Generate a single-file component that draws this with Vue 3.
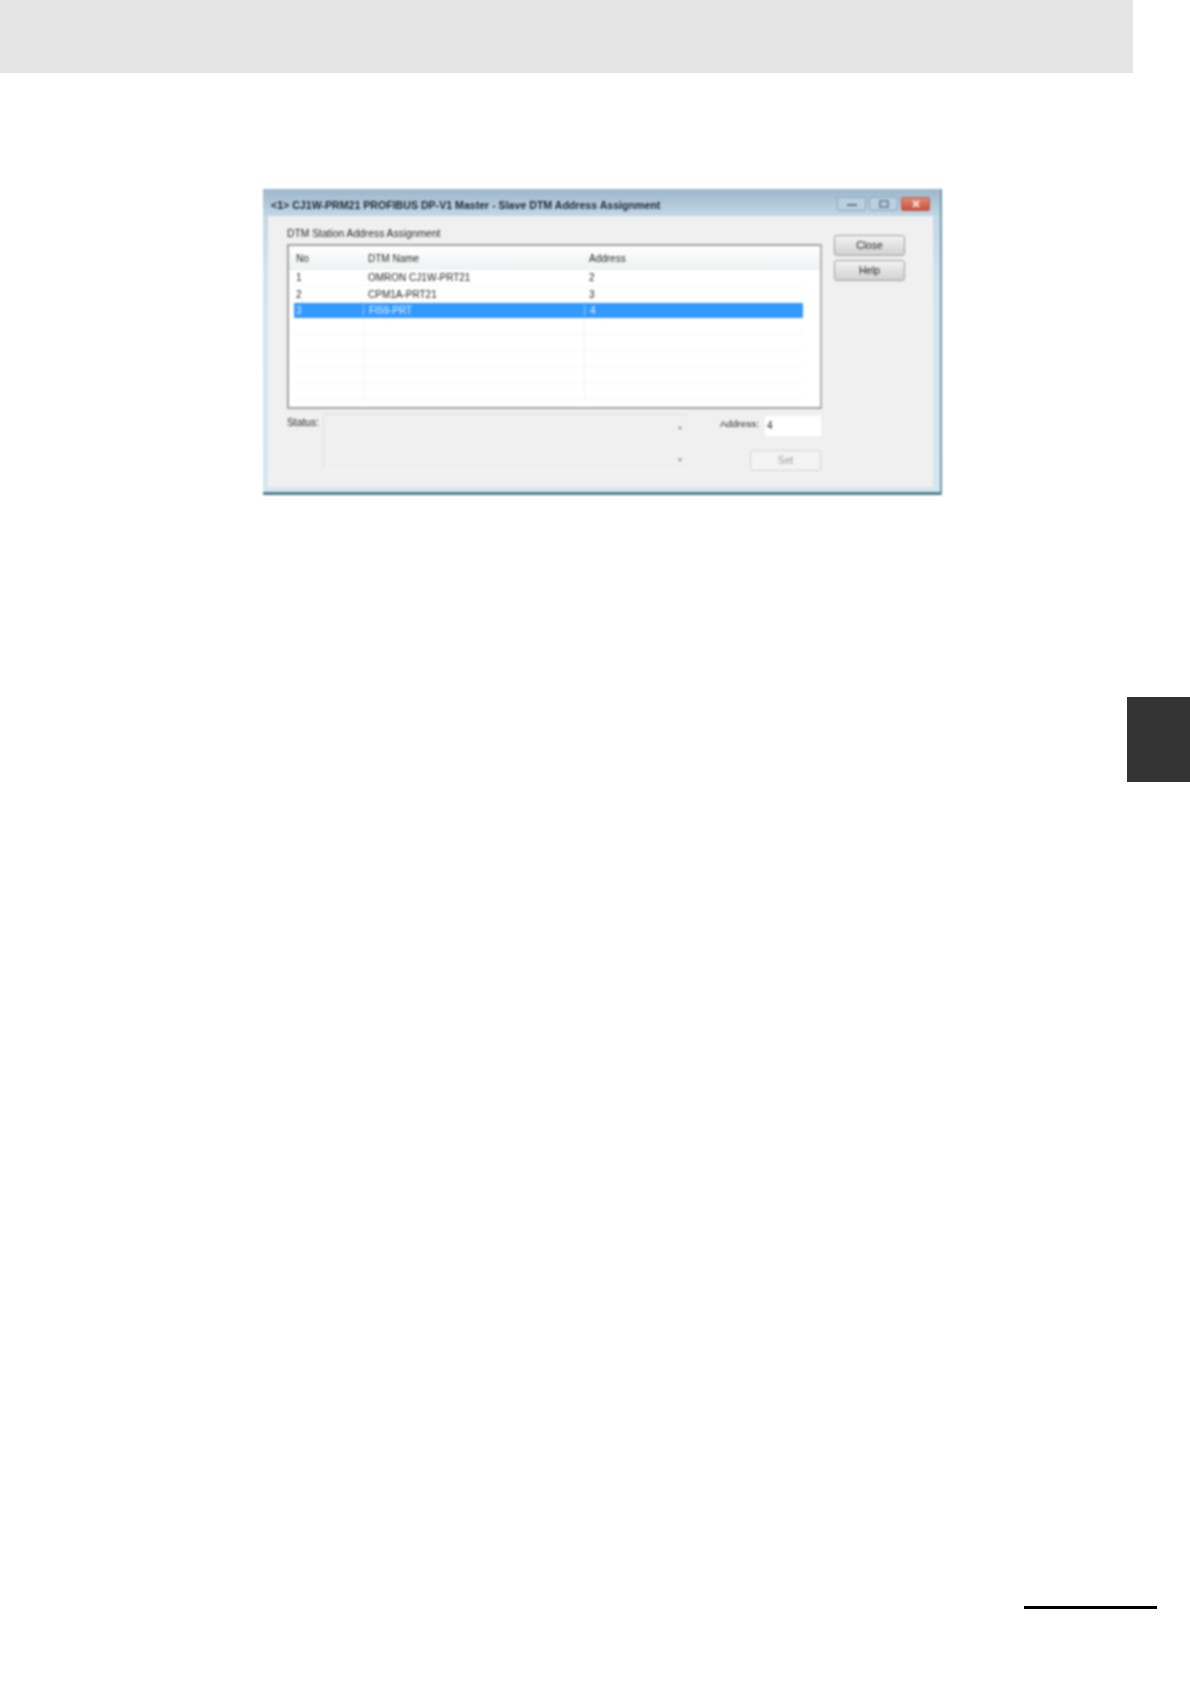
<template>
  <div class="page">
    <div class="top-band"></div>

    <div class="window">
      <div class="title-bar">
        <span class="title">&lt;1&gt; CJ1W-PRM21 PROFIBUS DP-V1 Master - Slave DTM Address Assignment</span>
        <div class="win-buttons">
          <div class="win-btn">
            <svg width="12" height="6" viewBox="0 0 12 6"><path d="M1 4h10" stroke="#5f7890" stroke-width="2" /></svg>
          </div>
          <div class="win-btn">
            <svg width="12" height="8" viewBox="0 0 12 8"><rect x="2" y="1" width="8" height="6" fill="none" stroke="#5f7890" stroke-width="1.5" /></svg>
          </div>
          <div class="win-btn close-x">
            <svg width="12" height="8" viewBox="0 0 12 8"><path d="M3 1l6 6M9 1L3 7" stroke="#f4e6e2" stroke-width="2" /></svg>
          </div>
        </div>
      </div>

      <div class="client">
        <div class="main-col">
          <div class="group-label">DTM Station Address Assignment</div>
          <div class="list">
            <div class="list-head">
              <span class="c-no">No</span>
              <span class="c-name">DTM Name</span>
              <span class="c-addr">Address</span>
            </div>
            <div
              v-for="row in rows"
              :key="row.no"
              class="list-row"
              :class="{ selected: row.selected }"
            >
              <span class="c-no">{{ row.no }}</span>
              <span class="c-name">{{ row.name }}</span>
              <span class="c-addr">{{ row.address }}</span>
            </div>
            <div v-for="n in 5" :key="n" class="list-row empty">
              <span class="c-no"></span>
              <span class="c-name"></span>
              <span class="c-addr"></span>
            </div>
          </div>

          <div class="lower">
            <span class="status-label">Status:</span>
            <div class="status-box">
              <span class="arrow">&#9650;</span>
              <span class="arrow">&#9660;</span>
            </div>
            <div class="address-side">
              <div class="address-line">
                <span class="address-label">Address:</span>
                <div class="address-input">4</div>
              </div>
              <button class="btn set" type="button" disabled>Set</button>
            </div>
          </div>
        </div>

        <div class="side-col">
          <button class="btn" type="button">Close</button>
          <button class="btn" type="button">Help</button>
        </div>
      </div>
    </div>

    <div class="side-tab"></div>
    <div class="foot-line"></div>
  </div>
</template>

<script setup>
const rows = [
  { no: 1, name: 'OMRON CJ1W-PRT21', address: 2 },
  { no: 2, name: 'CPM1A-PRT21', address: 3 },
  { no: 3, name: 'FI59-PRT', address: 4, selected: true }
]
</script>

<style>
body {
  background: #fff;
}
</style>

<style scoped>
.page {
  width: 1190px;
  height: 1684px;
  display: flex;
  flex-direction: column;
  font-family: "Liberation Sans", Arial, sans-serif;
  color: #262626;
  overflow: hidden;
}

.top-band {
  width: 1133px;
  height: 73px;
  background: #e5e5e5;
}

.window {
  width: 679px;
  height: 306px;
  margin: 116px 0 0 263px;
  display: flex;
  flex-direction: column;
  box-sizing: border-box;
  padding: 0 7px 5px 5px;
  background: linear-gradient(#9db6cc, #c3d7e6 9%, #d3e4f0 30%, #d6e6f1);
  border-bottom: 3px solid #4f7f8c;
  border-right: 2px solid #6f9aa6;
  filter: blur(0.8px);
}

.title-bar {
  height: 27px;
  flex: none;
  display: flex;
  align-items: flex-start;
  justify-content: space-between;
}

.title {
  margin: 10px 0 0 3px;
  font-size: 10.6px;
  line-height: 12px;
  font-weight: bold;
  color: #1c242c;
  white-space: nowrap;
}

.win-buttons {
  display: flex;
  gap: 3px;
  margin: 8px 3px 0 0;
}

.win-btn {
  width: 29px;
  height: 14px;
  box-sizing: border-box;
  display: flex;
  align-items: center;
  justify-content: center;
  background: #bccfe0;
  border: 1px solid #8fa6bc;
  border-radius: 2px;
}

.close-x {
  background: linear-gradient(#e08a74, #cc4f38);
  border-color: #b7604c;
}

.client {
  flex: 1;
  display: flex;
  background: #f0f0f0;
  padding: 10px 0 0 19px;
}

.main-col {
  width: 536px;
  flex: none;
}

.group-label {
  height: 18px;
  box-sizing: border-box;
  padding-top: 1px;
  font-size: 10.3px;
  line-height: 14px;
}

.list {
  height: 165px;
  margin-right: 1px;
  box-sizing: border-box;
  border: 2px solid #a3a3a3;
  border-right-color: #b0b0b0;
  background: #fff;
  padding-right: 17px;
}

.list-head {
  height: 24px;
  display: flex;
  align-items: center;
  background: linear-gradient(#fff, #eff1f2);
  font-size: 10px;
  margin-right: -17px;
}

.list-row {
  height: 16.4px;
  display: flex;
  align-items: center;
  font-size: 10px;
  margin-left: 5px;
  border-bottom: 1px solid #f6f6f6;
  box-sizing: border-box;
}

.list-row.selected {
  background: #3399ff;
  color: #e4f1ff;
  height: 15px;
  border-bottom: none;
  border-radius: 1px;
}

.list-row.empty .c-name,
.list-row.empty .c-addr {
  height: 100%;
  border-left: 1px solid #f4f4f4;
}

.c-no {
  width: 69px;
  flex: none;
  box-sizing: border-box;
  padding-left: 2px;
}

.list-head .c-no {
  width: 74px;
  padding-left: 7px;
}

.c-name {
  width: 221px;
  flex: none;
  box-sizing: border-box;
  padding-left: 5px;
}

.c-addr {
  flex: 1;
  box-sizing: border-box;
  padding-left: 5px;
}

.selected .c-name,
.selected .c-addr {
  border-left: 1px solid #8cc4fa;
}

.lower {
  display: flex;
  margin-top: 5px;
}

.status-label {
  width: 36px;
  flex: none;
  font-size: 10.3px;
  padding-top: 3px;
}

.status-box {
  width: 365px;
  height: 56px;
  box-sizing: border-box;
  border-top: 1px solid #dcdcdc;
  border-left: 1px solid #e2e2e2;
  border-bottom: 1px solid #f9f9f9;
  display: flex;
  flex-direction: column;
  justify-content: space-between;
  align-items: flex-end;
  padding: 8px 5px 5px 0;
}

.arrow {
  font-size: 6px;
  line-height: 8px;
  color: #8a8a8a;
}

.address-side {
  flex: 1;
  display: flex;
  flex-direction: column;
  align-items: flex-end;
  padding-right: 2px;
}

.address-line {
  display: flex;
  align-items: flex-start;
  gap: 6px;
  margin-top: 2px;
}

.address-label {
  font-size: 9.9px;
  line-height: 12px;
  padding-top: 2px;
}

.address-input {
  width: 56px;
  height: 20px;
  box-sizing: border-box;
  background: #fff;
  font-size: 10px;
  line-height: 20px;
  padding-left: 2px;
}

.side-col {
  display: flex;
  flex-direction: column;
  gap: 4px;
  padding: 9px 0 0 11px;
}

.btn {
  width: 71px;
  height: 21px;
  padding: 0;
  box-sizing: border-box;
  border: 1px solid #9d9d9d;
  border-radius: 3px;
  background: linear-gradient(#f4f4f4, #e2e2e2 50%, #d2d2d2);
  font-family: inherit;
  font-size: 10.3px;
  color: #262626;
}

.btn.set {
  margin-top: 14px;
  background: #f3f3f3;
  border-color: #d4d4d4;
  color: #9c9c9c;
}

.side-tab {
  width: 63px;
  height: 85px;
  margin: 202px 0 0 1127px;
  background: #333;
  flex: none;
}

.foot-line {
  width: 133px;
  height: 3px;
  margin: 824px 0 0 1024px;
  background: #000;
  flex: none;
}
</style>
